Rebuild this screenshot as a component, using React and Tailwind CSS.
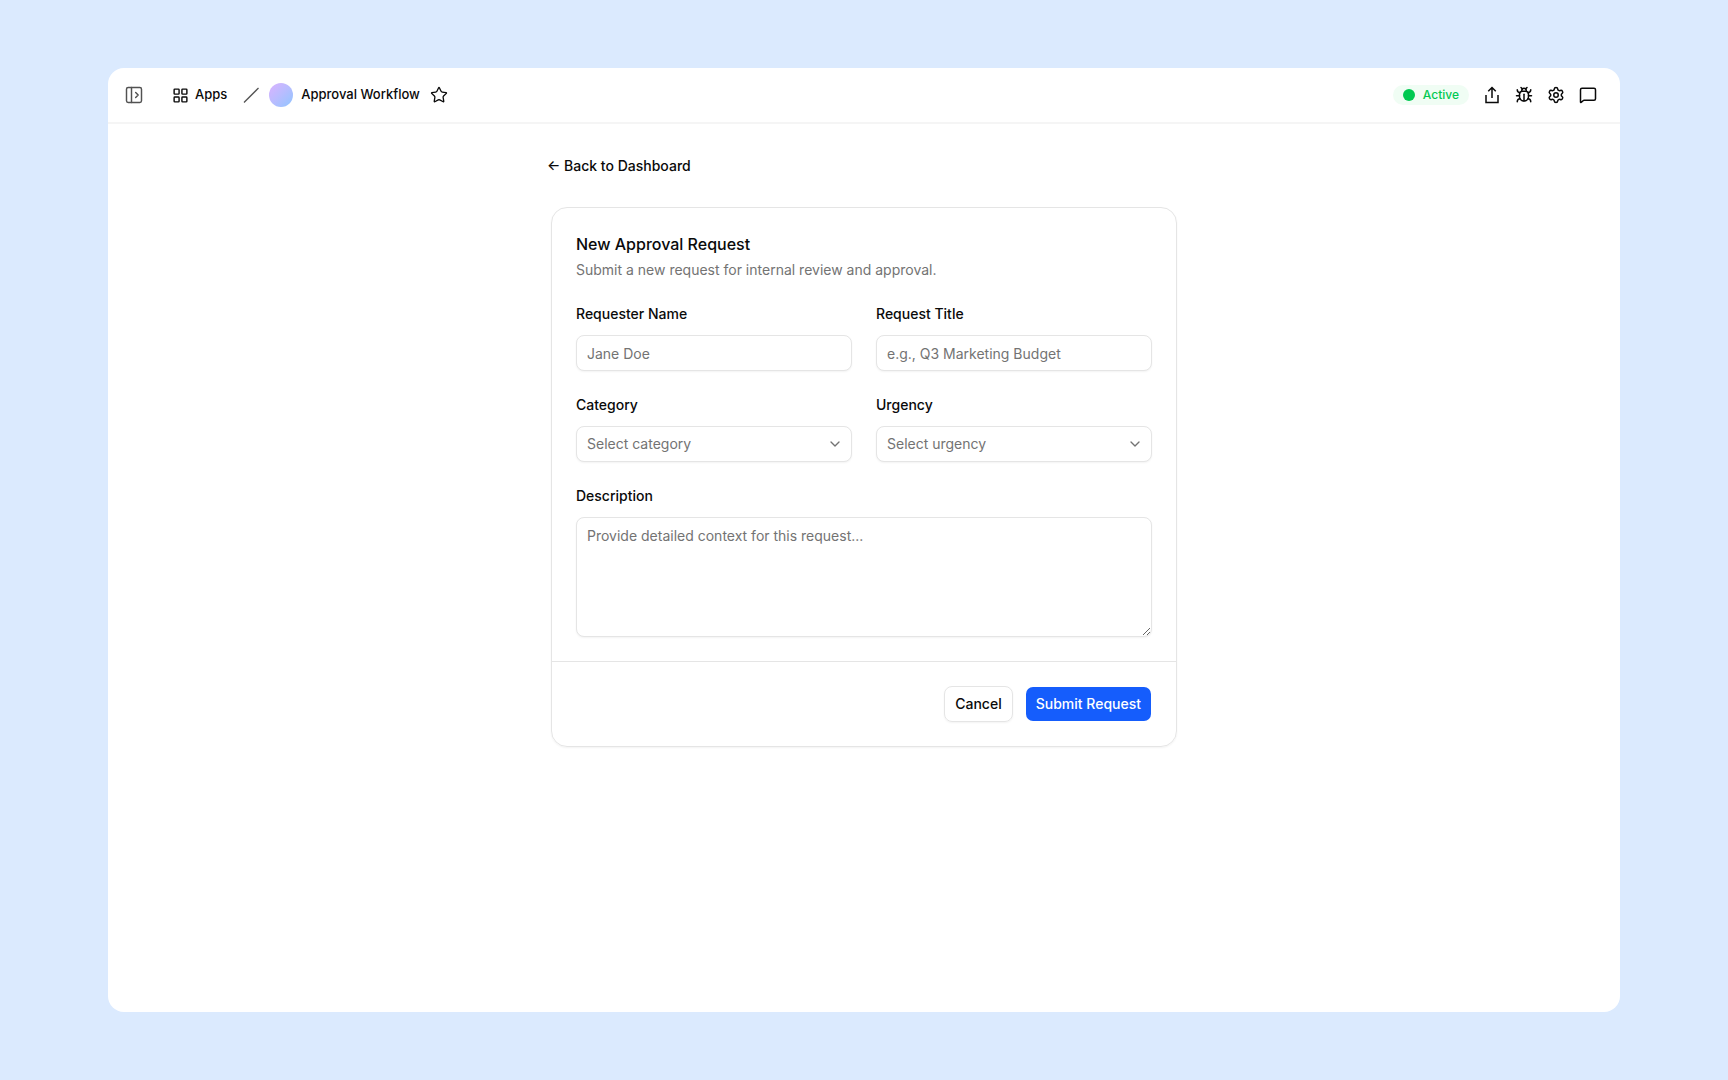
import { useState } from 'react';
import { Bug, ChevronDown, LayoutGrid, MessageSquare, PanelLeftOpen, Settings, Star } from 'lucide-react';

const controlClass =
  'w-full rounded-lg border border-neutral-200 bg-white px-[10px] text-sm shadow-xs outline-none placeholder:text-neutral-500 focus:border-neutral-400';

function ShareIcon() {
  return (
    <svg width="18" height="18" viewBox="0 0 24 24" fill="none" stroke="currentColor" strokeWidth="2">
      <path d="M12 2v14M7 7l5-5 5 5M4 12v10h16V12" />
    </svg>
  );
}

function Field({ id, label, children }) {
  return (
    <div className="flex flex-col gap-[11px]">
      <label htmlFor={id} className="text-sm font-medium">
        {label}
      </label>
      {children}
    </div>
  );
}

function SelectField({ id, label, placeholder, options }) {
  const [value, setValue] = useState('');

  return (
    <Field id={id} label={label}>
      <div className="grid items-center">
        <select
          id={id}
          value={value}
          onChange={(e) => setValue(e.target.value)}
          className={`${controlClass} col-start-1 row-start-1 h-9 appearance-none ${value ? 'text-neutral-950' : 'text-neutral-500'}`}
        >
          <option value="" disabled>
            {placeholder}
          </option>
          {options.map((o) => (
            <option key={o}>{o}</option>
          ))}
        </select>
        <ChevronDown size={16} className="pointer-events-none col-start-1 row-start-1 mr-[9px] justify-self-end text-neutral-500" />
      </div>
    </Field>
  );
}

function Header() {
  return (
    <header className="flex h-14 items-center justify-between border-b-2 border-neutral-100 pr-[23px] pl-4">
      <div className="flex items-center">
        <button aria-label="Open sidebar" className="text-neutral-600">
          <PanelLeftOpen size={20} strokeWidth={1.75} />
        </button>
        <a href="#apps" className="ml-7 flex items-center gap-[6px] text-[13px] font-medium">
          <LayoutGrid size={17} />
          Apps
        </a>
        <svg width="16" height="16" viewBox="0 0 16 16" className="ml-4 text-neutral-600" stroke="currentColor" strokeWidth="1.3">
          <path d="M1 15.5 15.500 1" />
        </svg>
        <span className="ml-[10px] size-6 rounded-full bg-linear-to-br from-purple-300 to-blue-300" />
        <span className="ml-2 text-[13px] font-medium">Approval Workflow</span>
        <button aria-label="Add to favourites" className="ml-[10px]">
          <Star size={18} strokeWidth={1.75} />
        </button>
      </div>
      <div className="flex items-center gap-[14px]">
        <span className="flex h-5 items-center gap-2 rounded-full bg-green-50 px-[10px] text-xs font-medium text-green-500">
          <span className="size-3 rounded-full bg-green-500" />
          Active
        </span>
        <button aria-label="Share">
          <ShareIcon />
        </button>
        <button aria-label="Debug">
          <Bug size={18} />
        </button>
        <button aria-label="Settings">
          <Settings size={18} />
        </button>
        <button aria-label="Comments">
          <MessageSquare size={18} />
        </button>
      </div>
    </header>
  );
}

export default function App() {
  return (
    <div className="flex min-h-screen bg-blue-100 px-[108px] py-[68px] font-['Inter',sans-serif] text-neutral-950">
      <div className="flex-1 rounded-2xl bg-white">
        <Header />
        <main className="mx-auto flex max-w-[626px] flex-col py-8">
          <a href="#dashboard" className="-ml-1 self-start text-sm font-medium">
            ← Back to Dashboard
          </a>

          <form onSubmit={(e) => e.preventDefault()} className="mt-[31px] rounded-2xl border border-neutral-200 shadow-xs">
            <div className="flex flex-col gap-6 p-6">
              <div className="flex flex-col gap-1">
                <h1 className="text-base font-medium">New Approval Request</h1>
                <p className="text-sm text-neutral-500">Submit a new request for internal review and approval.</p>
              </div>

              <div className="grid grid-cols-2 gap-6">
                <Field id="requester" label="Requester Name">
                  <input id="requester" type="text" placeholder="Jane Doe" className={`${controlClass} h-9`} />
                </Field>
                <Field id="title" label="Request Title">
                  <input id="title" type="text" placeholder="e.g., Q3 Marketing Budget" className={`${controlClass} h-9`} />
                </Field>
                <SelectField
                  id="category"
                  label="Category"
                  placeholder="Select category"
                  options={['Budget', 'Hiring', 'Travel', 'Software']}
                />
                <SelectField id="urgency" label="Urgency" placeholder="Select urgency" options={['Low', 'Medium', 'High']} />
              </div>

              <Field id="description" label="Description">
                <textarea
                  id="description"
                  placeholder="Provide detailed context for this request..."
                  className={`${controlClass} h-[120px] resize-y py-2`}
                />
              </Field>
            </div>

            <div className="flex justify-end gap-3 border-t border-neutral-200 p-6">
              <button type="button" className="h-9 rounded-lg border border-neutral-200 px-[10px] text-sm font-medium shadow-xs">
                Cancel
              </button>
              <button
                type="submit"
                className="h-9 rounded-lg border border-transparent bg-[#155dfc] bg-clip-padding px-[10px] text-sm font-medium text-white"
              >
                Submit Request
              </button>
            </div>
          </form>
        </main>
      </div>
    </div>
  );
}
